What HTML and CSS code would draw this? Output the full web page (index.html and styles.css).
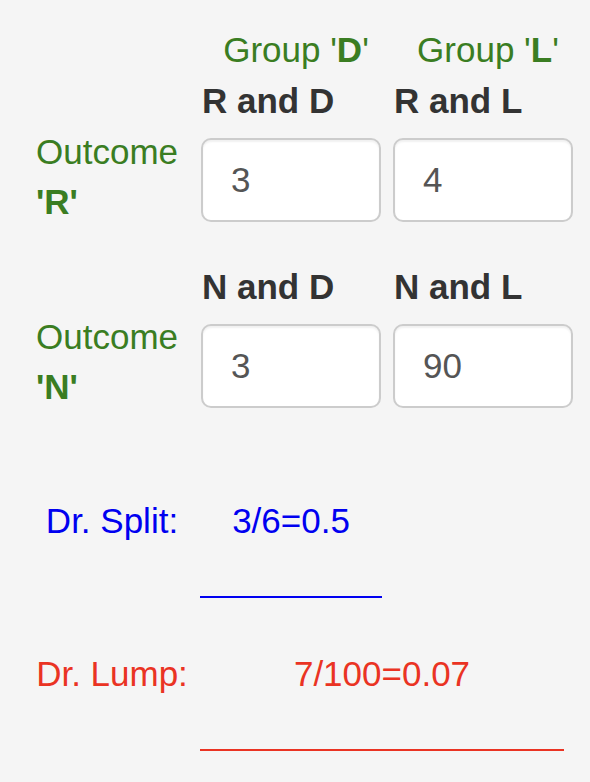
FILE: index.html
```html
<!DOCTYPE html>
<html>
<head>
<meta charset="utf-8">
<link rel="stylesheet" href="styles.css">
</head>
<body>
<div class="page">
  <div class="matrix">
    <div class="cell"></div>
    <div class="group">Group '<b>D</b>'</div>
    <div class="group">Group '<b>L</b>'</div>

    <div class="cell"></div>
    <div class="colhead">R and D</div>
    <div class="colhead">R and L</div>

    <div class="outcome first">Outcome<br><b>'R'</b></div>
    <div class="field"><input class="num" type="text" value="3"></div>
    <div class="field"><input class="num" type="text" value="4"></div>
  </div>

  <div class="matrix second">
    <div class="cell"></div>
    <div class="colhead">N and D</div>
    <div class="colhead">N and L</div>

    <div class="outcome">Outcome<br><b>'N'</b></div>
    <div class="field"><input class="num" type="text" value="3"></div>
    <div class="field"><input class="num" type="text" value="90"></div>
  </div>

  <div class="results">
    <div class="rlabel split">Dr. Split:</div>
    <div class="rvalue split-val">3/6=0.5</div>

    <div class="rlabel lump">Dr. Lump:</div>
    <div class="rvalue lump-val">7/100=0.07</div>
  </div>
</div>
</body>
</html>
```

FILE: styles.css
```css
html, body {
  margin: 0;
  padding: 0;
  background: #f5f5f5;
}

body {
  font-family: "Liberation Sans", Arial, Helvetica, sans-serif;
  font-size: 35px;
  line-height: 50px;
  color: #333;
}

.page {
  padding: 25px 0 0 36px;
}

.matrix {
  display: grid;
  grid-template-columns: 153px 180px 180px;
  column-gap: 12px;
  align-items: start;
}

.matrix.second {
  margin-top: 35px;
}

.group {
  color: #3a7d22;
  text-align: center;
  padding-left: 10px;
  margin-bottom: 1px;
  white-space: nowrap;
}

.colhead {
  font-weight: bold;
  color: #333;
  padding-left: 1px;
  white-space: nowrap;
}

.outcome {
  color: #3a7d22;
  white-space: nowrap;
}

.outcome.first {
  margin-top: 1px;
}

.field {
  margin-top: 12px;
}

.num {
  box-sizing: border-box;
  display: block;
  width: 180px;
  height: 84px;
  margin: 0;
  padding: 0 28px;
  border: 2px solid #cccccc;
  border-radius: 10px;
  background: #fff;
  box-shadow: inset 0 2px 2px rgba(0, 0, 0, 0.06);
  font-family: "Liberation Sans", Arial, Helvetica, sans-serif;
  font-size: 35px;
  color: #555;
  outline: none;
}

.results {
  display: grid;
  grid-template-columns: 164px 182px 182px;
  margin-top: 84px;
}

.rlabel {
  text-align: center;
  padding-right: 12px;
  white-space: nowrap;
}

.rvalue {
  text-align: center;
  padding-bottom: 50px;
  border-bottom: 2px solid;
}

.split {
  color: #0000f0;
  grid-column: 1;
}

.split-val {
  color: #0000f0;
  border-bottom-color: #0000f0;
  grid-column: 2;
}

.lump {
  color: #ea3323;
  grid-column: 1;
  margin-top: 51px;
}

.lump-val {
  color: #ea3323;
  border-bottom-color: #ea3323;
  grid-column: 2 / span 2;
  margin-top: 51px;
}
```
